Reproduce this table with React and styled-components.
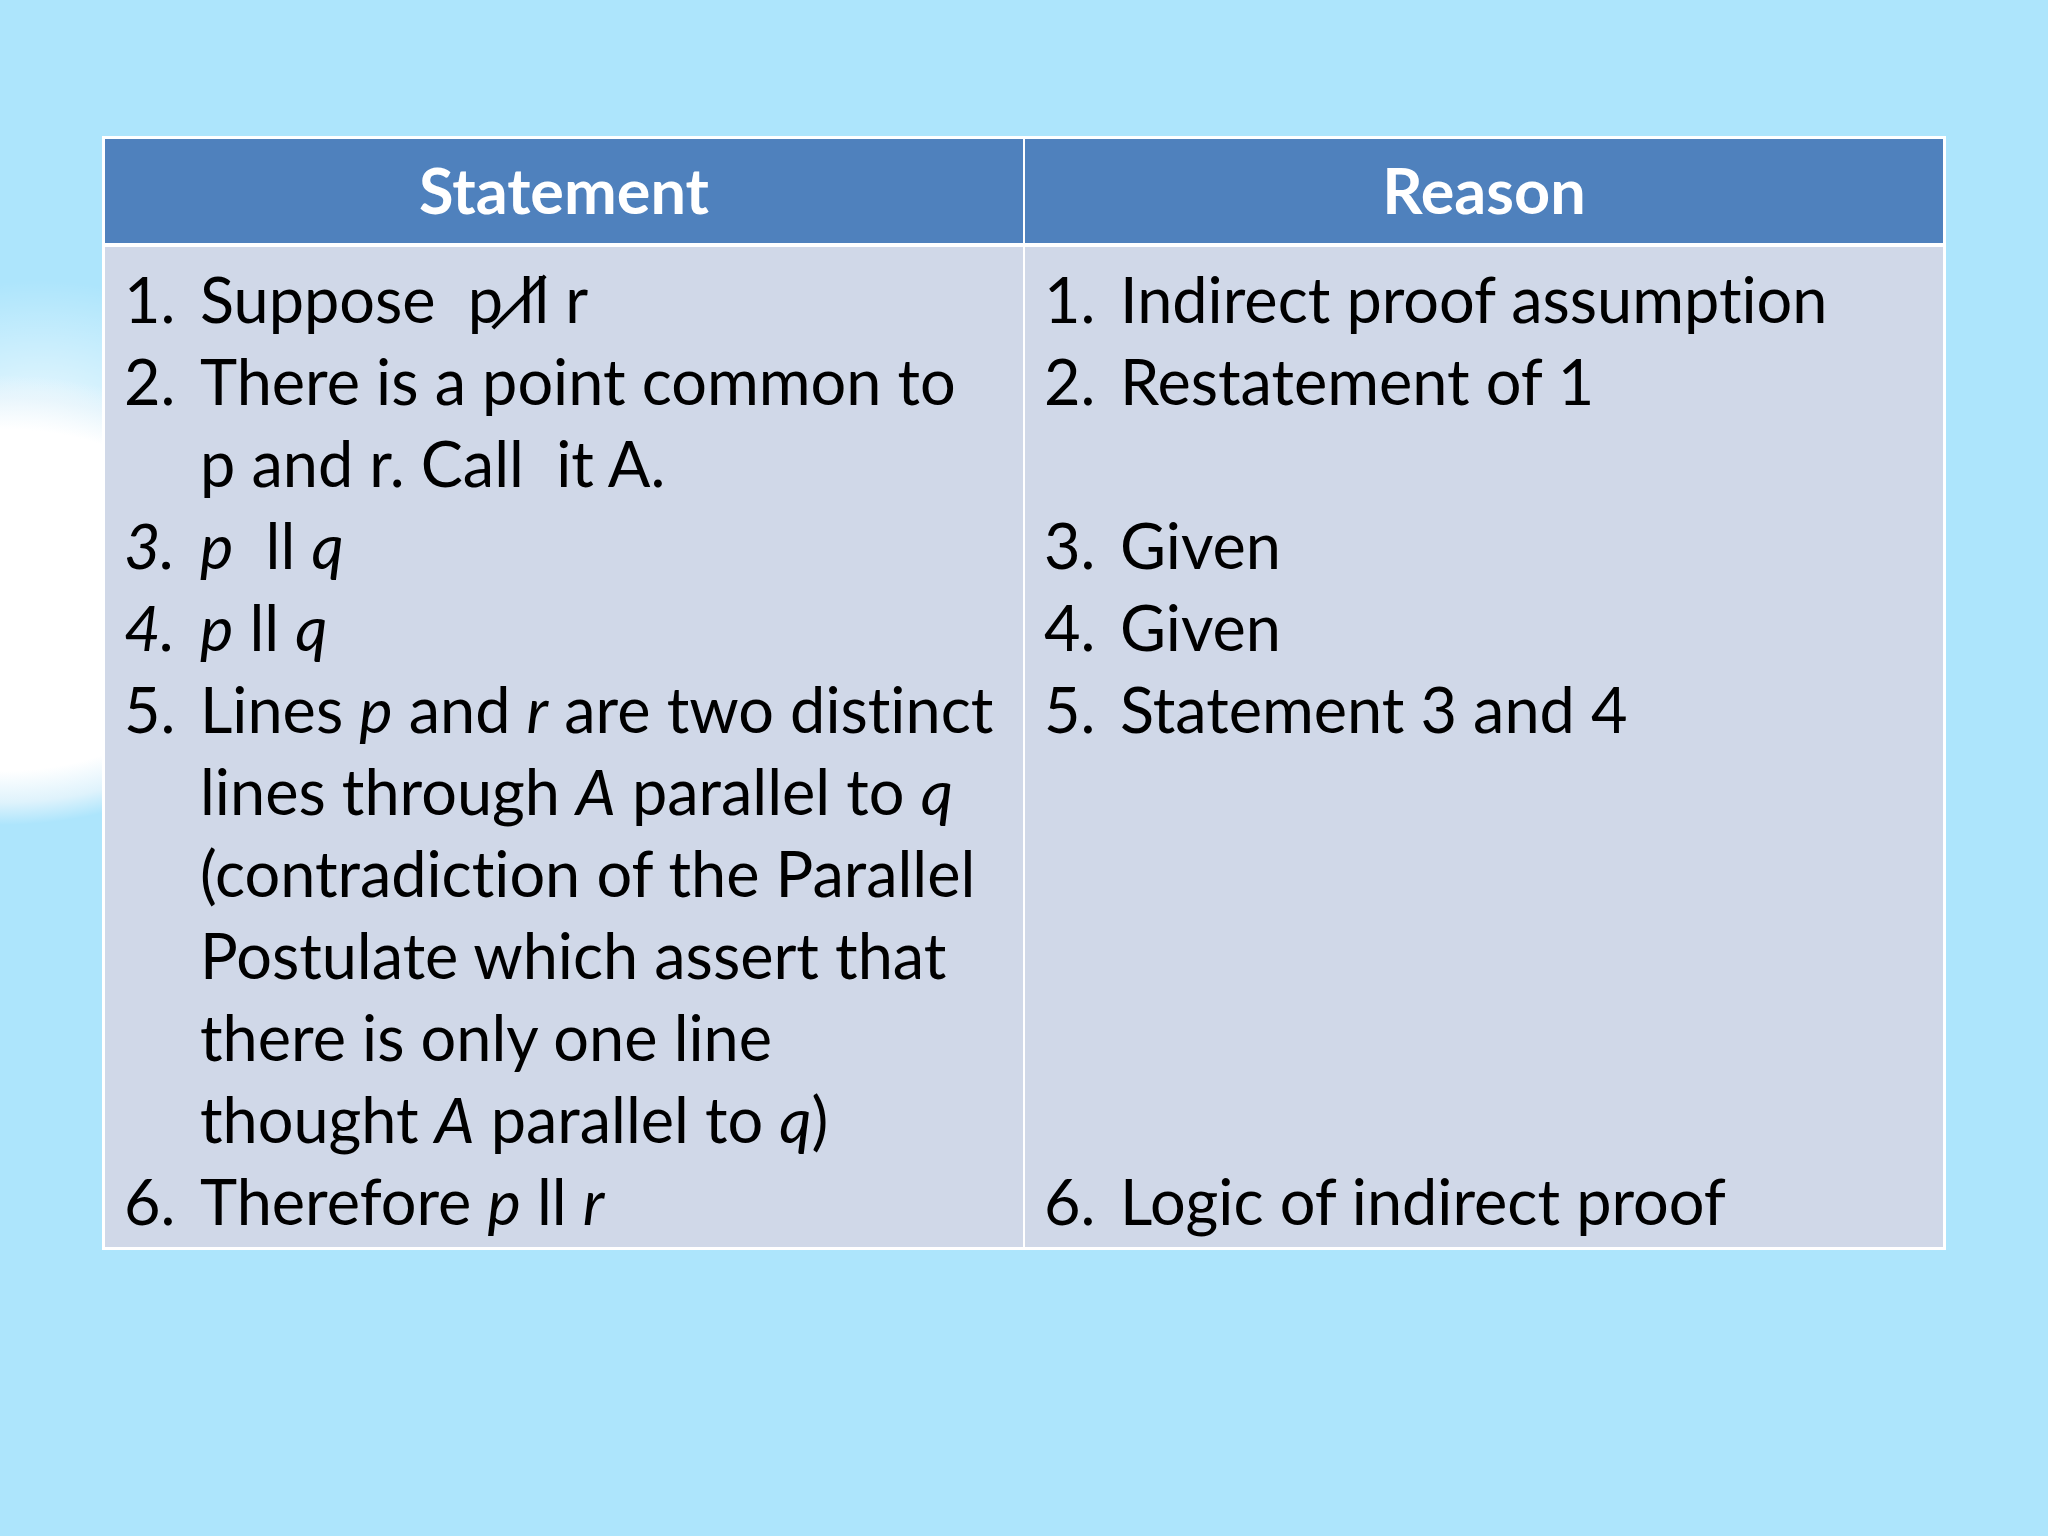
import React from 'react';
import styled, { createGlobalStyle } from 'styled-components';

const LINE = 82;

const statements = [
  { n: '1.', body: <>Suppose&nbsp; p <Crossed>ll</Crossed> r</> },
  { n: '2.', body: <>There is a point common to<br />p and r. Call&nbsp; it A.</> },
  { n: '3.', italicNum: true, body: <><i>p</i>&nbsp; ll <i>q</i></> },
  { n: '4.', italicNum: true, body: <><i>p</i> ll <i>q</i></> },
  {
    n: '5.',
    body: (
      <>
        Lines <i>p</i> and <i>r</i> are two distinct<br />
        lines through <i>A</i> parallel to <i>q</i><br />
        (contradiction of the Parallel<br />
        Postulate which assert that<br />
        there is only one line<br />
        thought <i>A</i> parallel to <i>q</i>)
      </>
    ),
  },
  { n: '6.', body: <>Therefore <i>p</i> ll <i>r</i></> },
];

const reasons = [
  { n: '1.', body: 'Indirect proof assumption' },
  { n: '2.', body: 'Restatement of 1' },
  { n: '3.', body: 'Given', skip: 1 },
  { n: '4.', body: 'Given' },
  { n: '5.', body: 'Statement 3 and 4' },
  { n: '6.', body: 'Logic of indirect proof', skip: 5 },
];

const ProofList = ({ items }) => (
  <List>
    {items.map((item) => (
      <Item key={item.n} $skip={item.skip || 0}>
        <Num $italic={item.italicNum}>{item.n}</Num>
        <Text>{item.body}</Text>
      </Item>
    ))}
  </List>
);

const App = () => (
  <>
    <GlobalStyle />
    <Slide>
      <Table>
        <thead>
          <tr>
            <HeadCell>Statement</HeadCell>
            <HeadCell>Reason</HeadCell>
          </tr>
        </thead>
        <tbody>
          <tr>
            <BodyCell>
              <ProofList items={statements} />
            </BodyCell>
            <BodyCell>
              <ProofList items={reasons} />
            </BodyCell>
          </tr>
        </tbody>
      </Table>
    </Slide>
  </>
);

const GlobalStyle = createGlobalStyle`
  html, body {
    margin: 0;
    padding: 0;
  }

  body {
    background: #ade5fc;
    font-family: Lato, "Liberation Sans", sans-serif;
    font-variant-ligatures: none;
  }
`;

const Slide = styled.main`
  width: 2048px;
  height: 1536px;
  box-sizing: border-box;
  padding: 136px 0 0 102px;
  background:
    radial-gradient(ellipse 320px 225px at 0px 600px, #ffffff 0%, #ffffff 76%, rgba(235, 246, 252, 0.8) 90%, rgba(255, 255, 255, 0) 100%),
    radial-gradient(ellipse 220px 140px at 40px 420px, rgba(255, 255, 255, 0.75) 0%, rgba(255, 255, 255, 0) 100%),
    #ade5fc;
  overflow: hidden;
`;

const Table = styled.table`
  width: 1844px;
  border-collapse: collapse;
  table-layout: fixed;
  border: 3px solid #fff;
`;

const HeadCell = styled.th`
  height: 100px;
  padding: 0 0 4px;
  background: #4f81bd;
  color: #fff;
  font-size: 63px;
  font-weight: 700;
  text-align: center;
  border-bottom: 4px solid #fff;

  & + & {
    border-left: 2px solid #fff;
  }
`;

const BodyCell = styled.td`
  padding: 11px 12px 5px 19px;
  background: #d0d8e8;
  vertical-align: top;

  & + & {
    border-left: 2px solid #fff;
  }
`;

const List = styled.ol`
  list-style: none;
  margin: 0;
  padding: 0;
`;

const Item = styled.li`
  display: grid;
  grid-template-columns: 76px 1fr;
  margin-top: ${(p) => p.$skip * LINE}px;
  font-size: 63px;
  line-height: ${LINE}px;
  color: #000;
  white-space: nowrap;
`;

const Num = styled.span`
  font-style: ${(p) => (p.$italic ? 'italic' : 'normal')};
`;

const Text = styled.span`
  i {
    font-style: italic;
  }
`;

function Crossed({ children }) {
  return <Slash>{children}</Slash>;
}

const Slash = styled.span`
  position: relative;
  display: inline-block;

  &::after {
    content: '';
    position: absolute;
    left: 50%;
    top: 50%;
    width: 74px;
    height: 4px;
    margin-left: -52px;
    margin-top: 1px;
    background: #000;
    transform: rotate(-45deg);
  }
`;

export default App;
